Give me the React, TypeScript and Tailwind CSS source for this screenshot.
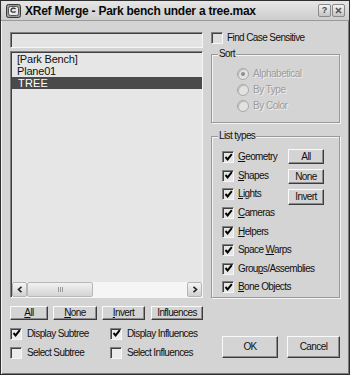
import React from "react";

const txt = "text-[10px] leading-[12px] tracking-[-0.6px] text-[#111]";

function Check({ on, fill = "bg-[#ececec]" }: { on?: boolean; fill?: string }) {
  return (
    <span
      className={`w-[12px] h-[12px] shrink-0 flex items-center justify-center border border-t-[#808080] border-l-[#808080] border-b-[#f6f6f6] border-r-[#f6f6f6] shadow-[inset_1px_1px_0_#404040] ${fill}`}
    >
      {on && (
        <svg width="9" height="9" viewBox="0 0 9 9">
          <path d="M1.5 4 L3.6 6.4 L7.8 1.2" stroke="#000" strokeWidth="1.9" fill="none" />
        </svg>
      )}
    </span>
  );
}

function Btn({ children, className = "" }: { children: React.ReactNode; className?: string }) {
  return (
    <div
      className={`flex items-center justify-center bg-[#d4d4d4] border border-t-[#fafafa] border-l-[#fafafa] border-b-[#3c3c3c] border-r-[#3c3c3c] shadow-[inset_-1px_-1px_0_#8c8c8c] ${txt} ${className}`}
    >
      {children}
    </div>
  );
}

function Radio({ on, label }: { on?: boolean; label: string }) {
  return (
    <div className="h-[16px] flex items-center gap-[4px]">
      <span className="w-[12px] h-[12px] rounded-full border border-[#a8a8a8] bg-[#e2e2e2] flex items-center justify-center shadow-[inset_1px_1px_0_#bcbcbc]">
        {on && <span className="w-[4px] h-[4px] rounded-full bg-[#8e8e8e]" />}
      </span>
      <span className="text-[10px] leading-[12px] tracking-[-0.5px] text-[#9c9c9c] [text-shadow:1px_1px_0_#efefef]">{label}</span>
    </div>
  );
}

function Group({ title, className = "", children }: { title: string; className?: string; children: React.ReactNode }) {
  return (
    <fieldset
      className={`min-w-0 w-full border border-[#999] shadow-[1px_1px_0_#f4f4f4,inset_1px_1px_0_#f4f4f4] ${className}`}
    >
      <legend className={`ml-[6px] px-[1px] bg-[#d4d4d4] ${txt}`}>{title}</legend>
      {children}
    </fieldset>
  );
}

const types: [string, string, string][] = [
  ["", "G", "eometry"],
  ["", "S", "hapes"],
  ["", "L", "ights"],
  ["", "C", "ameras"],
  ["", "H", "elpers"],
  ["Space ", "W", "arps"],
  ["Grou", "p", "s/Assemblies"],
  ["", "B", "one Objects"],
];

export default function App() {
  return (
    <div className="w-[350px] h-[375px] flex flex-col bg-[#d4d4d4] border border-[#2e2e2e] shadow-[inset_1px_1px_0_#f2f2f2,inset_-1px_-1px_0_#7a7a7a] font-['Liberation_Sans',Arial,sans-serif] overflow-hidden">
      {/* title bar */}
      <div className="h-[20px] shrink-0 flex items-center pl-[5px] pr-[4px] bg-gradient-to-b from-[#e6e6e6] to-[#cdcdcd] border-b border-[#9a9a9a]">
        <svg width="15" height="14" viewBox="0 0 15 14" className="shrink-0">
          <rect x="0.5" y="0.5" width="14" height="13" rx="2" fill="#9a9a9a" stroke="#3a3a3a" />
          <rect x="2.5" y="2.5" width="10" height="9" rx="2" fill="#e8e8e8" stroke="#555" />
          <path d="M9.5 5 C8 3.6 5 4 5 6.2 C5 8.4 8 8.6 9.6 7.4" stroke="#333" strokeWidth="1.3" fill="none" />
        </svg>
        <span className="ml-[4px] text-[12px] leading-[14px] font-bold tracking-[-0.25px] text-[#0a0a0a] whitespace-nowrap">
          XRef Merge - Park bench under a tree.max
        </span>
        <div className="ml-auto flex gap-[1px]">
          <span className="w-[13px] h-[13px] rounded-[2px] border border-[#8a8a8a] bg-gradient-to-b from-[#f4f4f4] to-[#c4c4c4] flex items-center justify-center text-[9px] font-bold leading-none text-[#444]">
            ?
          </span>
          <span className="w-[13px] h-[13px] rounded-[2px] border border-[#8a8a8a] bg-gradient-to-b from-[#f4f4f4] to-[#c4c4c4] flex items-center justify-center">
            <svg width="7" height="7" viewBox="0 0 7 7">
              <path d="M1 1 L6 6 M6 1 L1 6" stroke="#555" strokeWidth="1.6" />
            </svg>
          </span>
        </div>
      </div>

      {/* body */}
      <div className="flex-1 flex pl-[9px] gap-[8px]">
        {/* left column */}
        <div className="w-[193px] shrink-0 flex flex-col pt-[11px]">
          <div className="h-[16px] bg-[#e4e4e4] border border-t-[#808080] border-l-[#808080] border-b-[#f6f6f6] border-r-[#f6f6f6] shadow-[inset_1px_1px_0_#404040]" />
          <div className="mt-[3px] h-[247px] flex flex-col bg-[#e6e6e6] border border-t-[#808080] border-l-[#808080] border-b-[#f6f6f6] border-r-[#f6f6f6] shadow-[inset_1px_1px_0_#404040] pt-[1px] pl-[1px]">
            <div className="h-[12px] flex items-center pl-[5px] text-[11px] leading-[12px] tracking-[-0.2px] text-[#111]">[Park Bench]</div>
            <div className="h-[12px] flex items-center pl-[5px] text-[11px] leading-[12px] tracking-[-0.2px] text-[#111]">Plane01</div>
            <div className="h-[12px] flex items-center pl-[6px] bg-[#4a4a4a] text-[11px] leading-[12px] tracking-[0.2px] text-white">TREE</div>
            <div className="flex-1" />
            <div className="h-[15px] flex bg-[#f5f5f5]">
              <span className="w-[15px] h-[15px] rounded-[2px] border border-[#b4b4b4] bg-gradient-to-b from-[#f6f6f6] to-[#d0d0d0] flex items-center justify-center">
                <svg width="6" height="7" viewBox="0 0 6 7"><path d="M4.5 0.8 L1.5 3.5 L4.5 6.2" stroke="#222" strokeWidth="1.6" fill="none" /></svg>
              </span>
              <span className="w-[66px] h-[15px] rounded-[2px] border border-[#b8b8b8] bg-gradient-to-b from-[#f2f2f2] to-[#d4d4d4] flex items-center justify-center gap-[1px]">
                <span className="w-[1px] h-[5px] bg-[#9a9a9a]" />
                <span className="w-[1px] h-[5px] bg-[#9a9a9a]" />
                <span className="w-[1px] h-[5px] bg-[#9a9a9a]" />
              </span>
              <span className="flex-1" />
              <span className="w-[15px] h-[15px] rounded-[2px] border border-[#b4b4b4] bg-gradient-to-b from-[#f6f6f6] to-[#d0d0d0] flex items-center justify-center">
                <svg width="6" height="7" viewBox="0 0 6 7"><path d="M1.5 0.8 L4.5 3.5 L1.5 6.2" stroke="#222" strokeWidth="1.6" fill="none" /></svg>
              </span>
            </div>
          </div>

          <div className="mt-[8px] flex gap-[5px]">
            <Btn className="w-[38px] h-[14px]"><span><u>A</u>ll</span></Btn>
            <Btn className="w-[44px] h-[14px]"><span><u>N</u>one</span></Btn>
            <Btn className="w-[43px] h-[14px]"><span><u>I</u>nvert</span></Btn>
            <Btn className="w-[52px] h-[14px] ml-[1px]">Influences</Btn>
          </div>

          <div className="mt-[7px] grid grid-cols-[100px_1fr] gap-y-[6px]">
            <div className="flex items-center gap-[5px] h-[13px]"><Check on /><span className={txt}>Display Subtree</span></div>
            <div className="flex items-center gap-[5px] h-[13px]"><Check on /><span className={txt}>Display Influences</span></div>
            <div className="flex items-center gap-[5px] h-[13px]"><Check /><span className={txt}>Select Subtree</span></div>
            <div className="flex items-center gap-[5px] h-[13px]"><Check /><span className={txt}>Select Influences</span></div>
          </div>
        </div>

        {/* right column */}
        <div className="w-[129px] shrink-0 flex flex-col">
          <div className="mt-[10px] h-[13px] flex items-center gap-[4px]">
            <Check fill="bg-[#dedede]" />
            <span className={txt}>Find Case Sensitive</span>
          </div>

          <Group title="Sort" className="mt-[4px] h-[75px]">
            <div className="pt-[6px] pl-[25px] flex flex-col">
              <Radio on label="Alphabetical" />
              <Radio label="By Type" />
              <Radio label="By Color" />
            </div>
          </Group>

          <Group title="List types" className="mt-[7px] h-[168px]">
            <div className="flex">
              <div className="w-[76px] shrink-0 pl-[10px] pt-[6px] flex flex-col">
                {types.map(([a, u, b]) => (
                  <div key={u + b} className="h-[18.6px] flex items-center gap-[4px] whitespace-nowrap">
                    <Check on fill="bg-[#e6e6e6]" />
                    <span className={txt}>
                      {a}
                      <u>{u}</u>
                      {b}
                    </span>
                  </div>
                ))}
              </div>
              <div className="pt-[7px] flex flex-col gap-[5px]">
                <Btn className="w-[36px] h-[15px]">All</Btn>
                <Btn className="w-[36px] h-[15px]">None</Btn>
                <Btn className="w-[36px] h-[16px]">Invert</Btn>
              </div>
            </div>
          </Group>

          <div className="mt-[38px] flex gap-[9px] pl-[11px]">
            <Btn className="w-[56px] h-[22px]">OK</Btn>
            <Btn className="w-[53px] h-[22px]">Cancel</Btn>
          </div>
        </div>
      </div>
    </div>
  );
}
